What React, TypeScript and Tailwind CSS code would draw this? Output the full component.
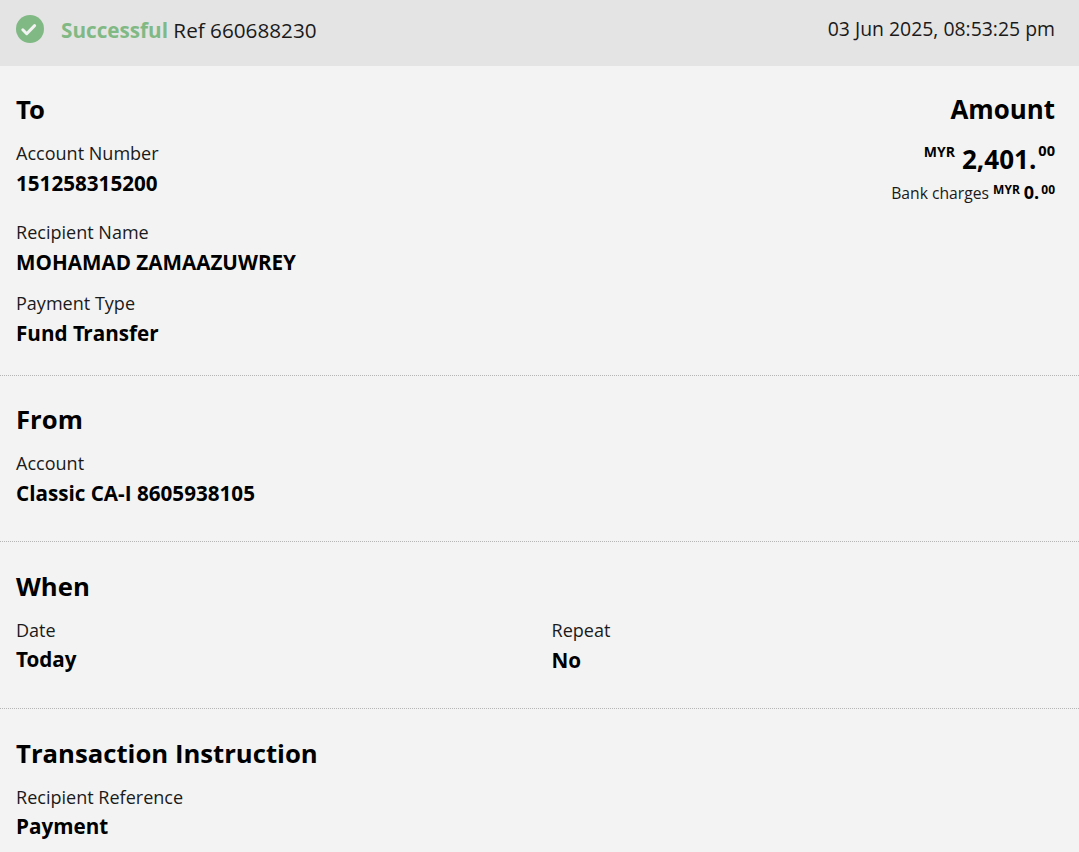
import type { ReactNode } from "react";

const font = "font-['Open_Sans',sans-serif] [font-kerning:normal] [text-rendering:optimizeLegibility]";

function Field({ label, value, className = "", valueClass = "mt-[6px]" }: { label: string; value: ReactNode; className?: string; valueClass?: string }) {
  return (
    <div className={className}>
      <div className="text-[18.05px] leading-[24px] text-[#1a1a1a]">{label}</div>
      <div className={`${valueClass} text-[20.65px] leading-[24px] font-bold text-black`}>{value}</div>
    </div>
  );
}

function Heading({ children }: { children: ReactNode }) {
  return <h2 className="text-[25.7px] leading-[32px] font-bold text-black">{children}</h2>;
}

export default function App() {
  return (
    <div className={`${font} w-[1079px] h-[852px] overflow-hidden bg-[#f3f3f3] text-black`}>
      <header className="h-[66px] bg-[#e4e4e4] px-[16px] flex items-start justify-between">
        <div className="flex items-start pt-[15px]">
          <svg width="28" height="28" viewBox="0 0 28 28" className="shrink-0">
            <circle cx="14" cy="14" r="14" fill="#81b985" />
            <path d="M6.8 14.8l3.9 3.9 7.9-8.1" fill="none" stroke="#f3f3f3" strokeWidth="3" strokeLinecap="round" strokeLinejoin="round" />
          </svg>
          <div className="ml-[17px] text-[20.7px] leading-[30px]">
            <span className="font-bold text-[#81b985]">Successful</span> <span className="text-[#1a1a1a]">Ref 660688230</span>
          </div>
        </div>
        <div className="pt-[14px] pr-[8px] text-[19.4px] leading-[30px] text-[#1a1a1a]">03 Jun 2025, 08:53:25 pm</div>
      </header>

      <section className="h-[310px] px-[16px] pt-[28px] border-b border-dotted border-[#b5b5b5] flex justify-between">
        <div>
          <Heading><span className="tracking-[-2px]">T</span>o</Heading>
          <Field label="Account Number" value="151258315200" className="mt-[15px]" />
          <Field label="Recipient Name" value="MOHAMAD ZAMAAZUWREY" className="mt-[25px]" />
          <Field label="Payment Type" value={<>Fund <span className="tracking-[-1.5px]">T</span>ransfer</>} className="mt-[17px]" />
        </div>
        <div className="pr-[8px] text-right">
          <h2 className="text-[25.9px] leading-[30px] font-bold text-black">Amount</h2>
          <div className="mt-[19px] h-[32px] leading-[32px] font-bold">
            <span className="text-[14px] leading-none align-[12px]">MYR</span>
            <span className="ml-[7px] text-[26px]">2,401.</span>
            <span className="ml-[2px] text-[14.6px] leading-none align-[13px]">00</span>
          </div>
          <div className="mt-[5px] h-[24px] leading-[24px] text-[15.7px] text-[#1a1a1a]">
            Bank charges <span className="font-bold text-black text-[12px] leading-none align-[5px]">MYR</span>
            <span className="ml-[4px] font-bold text-black text-[18px]">0.</span>
            <span className="ml-[2px] font-bold text-black text-[12px] leading-none align-[5px]">00</span>
          </div>
        </div>
      </section>

      <section className="h-[166px] px-[16px] pt-[28px] border-b border-dotted border-[#b5b5b5]">
        <Heading>From</Heading>
        <Field label="Account" value="Classic CA-I 8605938105" className="mt-[15px]" />
      </section>

      <section className="h-[167px] px-[16px] pt-[29px] border-b border-dotted border-[#b5b5b5]">
        <Heading>When</Heading>
        <div className="mt-[15px] grid grid-cols-2 gap-x-[24px]">
          <Field label="Date" value={<><span className="tracking-[-1.5px]">T</span>oday</>} valueClass="mt-[5px]" />
          <Field label="Repeat" value="No" />
        </div>
      </section>

      <section className="px-[16px] pt-[29px]">
        <Heading>Transaction Instruction</Heading>
        <Field label="Recipient Reference" value="Payment" className="mt-[15px]" valueClass="mt-[5px]" />
      </section>
    </div>
  );
}
